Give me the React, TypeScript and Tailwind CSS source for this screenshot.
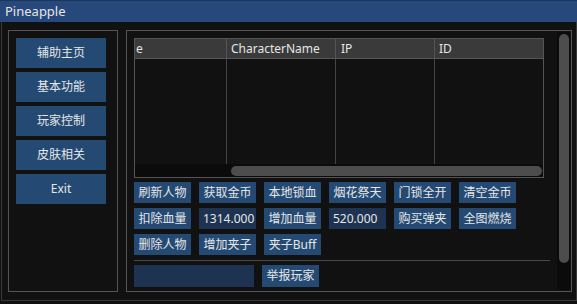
const font = { fontFamily: '"Noto Sans", "Noto Sans CJK SC", sans-serif' };

const sideItems = ["辅助主页", "基本功能", "玩家控制", "皮肤相关", "Exit"];

type Cell = { label: string; input?: boolean };

const cells: Cell[] = [
  { label: "刷新人物" },
  { label: "获取金币" },
  { label: "本地锁血" },
  { label: "烟花祭天" },
  { label: "门锁全开" },
  { label: "清空金币" },
  { label: "扣除血量" },
  { label: "1314.000", input: true },
  { label: "增加血量" },
  { label: "520.000", input: true },
  { label: "购买弹夹" },
  { label: "全图燃烧" },
  { label: "删除人物" },
  { label: "增加夹子" },
  { label: "夹子Buff" },
];

function PlayerTable() {
  return (
    <div className="w-[410px] h-[140px] border border-[#555] flex flex-col bg-[#111]">
      {/* header */}
      <div className="flex h-[20px] bg-[#3a3a3a] border-b border-[#555] text-[12px] leading-[19px] text-[#e6e6e6]">
        <div className="w-[92px] pl-[1px] border-r border-[#555]">e</div>
        <div className="w-[109px] pl-[4px] border-r border-[#555]">CharacterName</div>
        <div className="w-[99px] pl-[5px] border-r border-[#555]">IP</div>
        <div className="flex-1 pl-[4px]">ID</div>
      </div>
      {/* body with column lines */}
      <div className="flex flex-1">
        <div className="w-[92px] border-r border-[#444]" />
        <div className="w-[109px] border-r border-[#444]" />
        <div className="w-[99px] border-r border-[#444]" />
        <div className="flex-1" />
      </div>
      {/* horizontal scrollbar */}
      <div className="h-[13px] bg-[#0b0b0b] flex items-center pl-[96px] pr-[1px]">
        <div className="h-[10px] flex-1 rounded-full bg-[#4d4d4d]" />
      </div>
    </div>
  );
}

export default function App() {
  return (
    <div className="w-[577px] h-[304px] bg-[#111] text-[#e6e6e6] overflow-hidden" style={font}>
      {/* title bar */}
      <div className="h-[22px] bg-[#27487a] border-t border-[#1c355a] pl-[5px] text-[13px] leading-[20px]">
        Pineapple
      </div>

      <div className="ml-[1px] w-[576px] h-[279px] border-x border-b border-[#3a3a3a] flex gap-[8px] pl-[6px] pt-[8px]">
        {/* left menu */}
        <div className="w-[110px] h-[262px] border border-[#555] flex flex-col gap-[4px] pl-[7px] pt-[7px]">
          {sideItems.map((s) => (
            <div
              key={s}
              className="w-[90px] h-[30px] bg-[#244a74] flex items-center justify-center text-[12px]"
            >
              {s}
            </div>
          ))}
        </div>

        {/* right panel */}
        <div className="w-[446px] h-[262px] border border-[#555] flex">
          <div className="flex-1 pl-[7px] pt-[7px] flex flex-col">
            <PlayerTable />

            <div className="mt-[4px] grid grid-cols-[repeat(6,57px)] gap-x-[8px] gap-y-[5px]">
              {cells.map((c) => (
                <div
                  key={c.label}
                  className={
                    c.input
                      ? "h-[21px] bg-[#1e3352] text-[12px] leading-[21px] pl-[4px]"
                      : "h-[21px] bg-[#244a74] text-[12px] leading-[21px] text-center"
                  }
                >
                  {c.label}
                </div>
              ))}
            </div>

            <div className="mt-[5px] w-[416px] h-px bg-[#4a4a4a]" />

            <div className="mt-[4px] flex gap-[8px]">
              <div className="w-[120px] h-[22px] bg-[#1e3352]" />
              <div className="w-[57px] h-[22px] bg-[#244a74] text-[12px] leading-[22px] text-center">
                举报玩家
              </div>
            </div>
          </div>

          {/* vertical scrollbar */}
          <div className="w-[13px] mr-[1px] my-[1px] bg-[#0b0b0b] pl-[2px] pt-[2px]">
            <div className="w-[10px] h-[229px] rounded-full bg-[#4d4d4d]" />
          </div>
        </div>
      </div>
    </div>
  );
}
